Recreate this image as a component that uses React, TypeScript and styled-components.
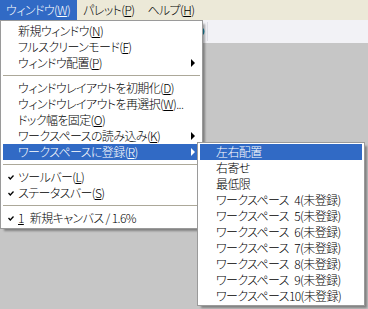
import React from 'react';
import styled, { createGlobalStyle } from 'styled-components';

const Global = createGlobalStyle`
  html, body { margin: 0; padding: 0; }
  body {
    width: 368px; height: 309px; overflow: hidden; background: #c6c6c6;
    font-family: "Noto Sans CJK JP", "Noto Sans", sans-serif; font-size: 12px;
  }
`;

const Screen = styled.div`
  position: relative;
  width: 368px;
  height: 309px;
  display: flex;
  flex-direction: column;
  background: #c6c6c6;
  font-feature-settings: "palt";
  font-weight: 300;
  letter-spacing: -0.6px;
  color: #000;
`;

const MenuBar = styled.div`
  display: flex;
  height: 20px;
  background: #ece9d8;
`;

const BarItem = styled.div<{ $active?: boolean }>`
  display: flex;
  align-items: center;
  padding: 0 7px 0 6px;
  line-height: 1;
  background: ${(p) => (p.$active ? '#316ac5' : 'transparent')};
  color: ${(p) => (p.$active ? '#fff' : '#000')};
  white-space: nowrap;
`;

const Toolbar = styled.div`
  height: 23px;
  background: #f2f2f6;
  display: flex;
  align-items: center;
  padding-left: 192px;
`;

const ToolButton = styled.div`
  width: 15px;
  height: 19px;
  border-right: 1px solid #dcdce4;
  display: flex;
  align-items: center;
  justify-content: center;
`;

const Workspace = styled.div`
  flex: 1;
  background: #c6c6c6;
`;

const Menu = styled.div<{ $left: number; $top: number; $width: number; $pad: number }>`
  position: absolute;
  left: ${(p) => p.$left}px;
  top: ${(p) => p.$top}px;
  width: ${(p) => p.$width}px;
  box-sizing: border-box;
  background: #fff;
  border: 1px solid #9a9a9a;
  padding: ${(p) => p.$pad}px 2px;
  box-shadow: 3px 3px 2px -1px rgba(0, 0, 0, 0.35);
  display: flex;
  flex-direction: column;
`;

const Item = styled.div<{ $active?: boolean; $indent: number }>`
  position: relative;
  height: 16px;
  display: flex;
  align-items: center;
  padding-left: ${(p) => p.$indent}px;
  white-space: pre;
  line-height: 1;
  background: ${(p) => (p.$active ? '#316ac5' : 'transparent')};
  color: ${(p) => (p.$active ? '#fff' : '#000')};
`;

const Separator = styled.div`
  height: 9px;
  display: flex;
  align-items: center;
  &::after {
    content: '';
    flex: 1;
    height: 1px;
    background: #aca899;
  }
`;

const Check = styled.svg`
  position: absolute;
  left: 5px;
  top: 6px;
`;

const Arrow = styled.svg`
  position: absolute;
  right: 5px;
  top: 4px;
`;

const Num = styled.span`
  margin-right: 6px;
`;

type Entry =
  | { sep: true }
  | { label: React.ReactNode; check?: boolean; sub?: boolean; active?: boolean };

const U: React.FC<{ c: string }> = ({ c }) => <u>{c}</u>;

const mainItems: Entry[] = [
  { label: <>新規ウィンドウ(<U c="N" />)</> },
  { label: <>フルスクリーンモード(<U c="F" />)</> },
  { label: <>ウィンドウ配置(<U c="P" />)</>, sub: true },
  { sep: true },
  { label: <>ウィンドウレイアウトを初期化(<U c="D" />)</> },
  { label: <>ウィンドウレイアウトを再選択(<U c="W" />)...</> },
  { label: <>ドック幅を固定(<U c="O" />)</> },
  { label: <>ワークスペースの読み込み(<U c="K" />)</>, sub: true },
  { label: <>ワークスペースに登録(<U c="R" />)</>, sub: true, active: true },
  { sep: true },
  { label: <>ツールバー(<U c="L" />)</>, check: true },
  { label: <>ステータスバー(<U c="S" />)</>, check: true },
  { sep: true },
  { label: <><Num><U c="1" /></Num>新規キャンバス / 1.6%</>, check: true },
];

const subItems: Entry[] = [
  { label: '左右配置', active: true },
  { label: '右寄せ' },
  { label: '最低限' },
  ...[4, 5, 6, 7, 8, 9].map((n) => ({ label: `ワークスペース\u2002${n}(未登録)` })),
  { label: 'ワークスペース10(未登録)' },
];

const renderItems = (items: Entry[], indent: number) =>
  items.map((it, i) =>
    'sep' in it ? (
      <Separator key={i} />
    ) : (
      <Item key={i} $active={it.active} $indent={indent}>
        {it.check && (
          <Check width="6" height="5" viewBox="0 0 6 5">
            <path d="M0.5 2 L2.3 4 L5.5 0.5" stroke={it.active ? '#fff' : '#000'} strokeWidth="1.3" fill="none" />
          </Check>
        )}
        {it.label}
        {it.sub && (
          <Arrow width="4" height="8" viewBox="0 0 4 8">
            <path d="M0 0 L4 4 L0 8 Z" fill={it.active ? '#fff' : '#000'} />
          </Arrow>
        )}
      </Item>
    )
  );

export default function App() {
  return (
    <>
      <Global />
      <Screen>
        <MenuBar>
          <BarItem $active>ウィンドウ(<U c="W" />)</BarItem>
          <BarItem>パレット(<U c="P" />)</BarItem>
          <BarItem>ヘルプ(<U c="H" />)</BarItem>
        </MenuBar>
        <Toolbar>
          <ToolButton>
            <svg width="11" height="11" viewBox="0 0 11 11">
              <circle cx="5.5" cy="5.5" r="4" stroke="#1a8fb0" strokeWidth="2" fill="none" />
            </svg>
          </ToolButton>
        </Toolbar>
        <Workspace />
        <Menu $left={0} $top={20} $width={203} $pad={2}>
          {renderItems(mainItems, 15)}
        </Menu>
        <Menu $left={197} $top={142} $width={168} $pad={1}>
          {renderItems(subItems, 16)}
        </Menu>
      </Screen>
    </>
  );
}
